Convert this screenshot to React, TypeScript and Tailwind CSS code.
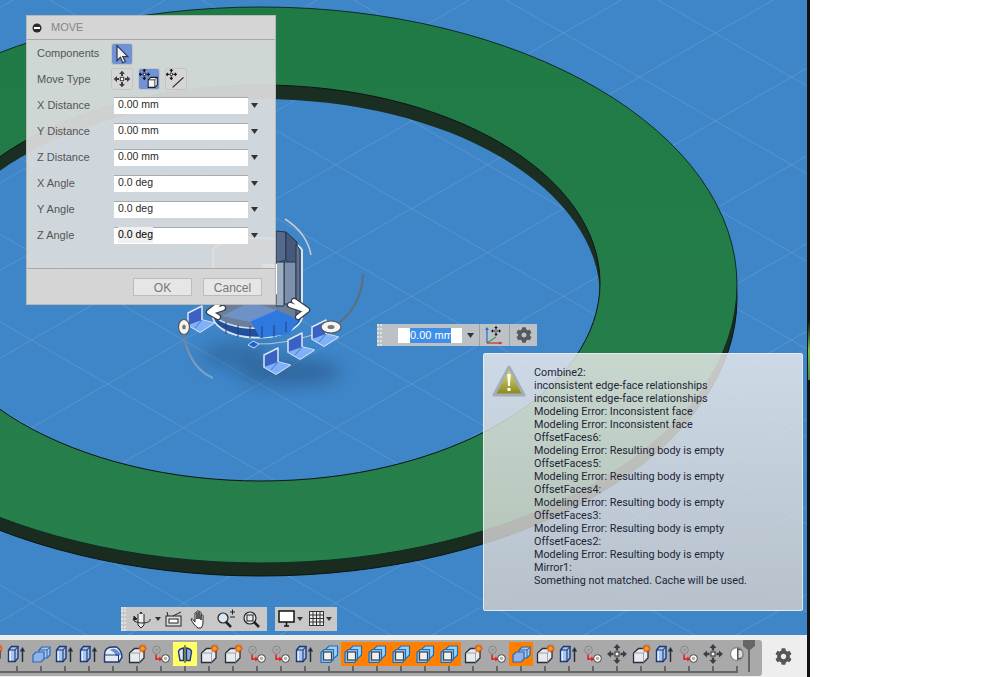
import type { ReactNode } from "react";
import { FaCog } from "react-icons/fa";

const FIELDS = [
  { label: "X Distance", value: "0.00 mm" },
  { label: "Y Distance", value: "0.00 mm" },
  { label: "Z Distance", value: "0.00 mm" },
  { label: "X Angle", value: "0.0 deg" },
  { label: "Y Angle", value: "0.0 deg" },
  { label: "Z Angle", value: "0.0 deg", focused: true },
];

const MESSAGES = [
  "Combine2:",
  "inconsistent edge-face relationships",
  "inconsistent edge-face relationships",
  "Modeling Error: Inconsistent face",
  "Modeling Error: Inconsistent face",
  "OffsetFaces6:",
  "Modeling Error: Resulting body is empty",
  "OffsetFaces5:",
  "Modeling Error: Resulting body is empty",
  "OffsetFaces4:",
  "Modeling Error: Resulting body is empty",
  "OffsetFaces3:",
  "Modeling Error: Resulting body is empty",
  "OffsetFaces2:",
  "Modeling Error: Resulting body is empty",
  "Mirror1:",
  "Something not matched. Cache will be used.",
];

type Kind = "press" | "combine" | "fillet" | "star" | "spheres" | "mirror" | "offset" | "move" | "end";

const TIMELINE: { kind: Kind; bg?: string }[] = [
  { kind: "star" },
  { kind: "press" },
  { kind: "combine" },
  { kind: "press" },
  { kind: "press" },
  { kind: "fillet" },
  { kind: "star" },
  { kind: "spheres" },
  { kind: "mirror", bg: "bg-[#ffff66]" },
  { kind: "star" },
  { kind: "star" },
  { kind: "spheres" },
  { kind: "spheres" },
  { kind: "press" },
  { kind: "offset" },
  { kind: "offset", bg: "bg-[#ff8000]" },
  { kind: "offset", bg: "bg-[#ff8000]" },
  { kind: "offset", bg: "bg-[#ff8000]" },
  { kind: "offset", bg: "bg-[#ff8000]" },
  { kind: "offset", bg: "bg-[#ff8000]" },
  { kind: "star" },
  { kind: "spheres" },
  { kind: "combine", bg: "bg-[#ff8000]" },
  { kind: "star" },
  { kind: "press" },
  { kind: "spheres" },
  { kind: "move" },
  { kind: "star" },
  { kind: "press" },
  { kind: "spheres" },
  { kind: "move" },
  { kind: "end" },
];

function MoveArrows({ color = "#3c3f44" }: { color?: string }) {
  return (
    <g fill={color}>
      <path d="M12 2l3.500 4h-2.300v2.500h-2.400V6H8.500z" />
      <path d="M12 22l3.500-4h-2.300v-2.500h-2.400V18H8.500z" />
      <path d="M2 12l4-3.500v2.300h2.500v2.400H6v2.300z" />
      <path d="M22 12l-4-3.500v2.300h-2.500v2.400H18v2.300z" />
      <rect x="10" y="10" width="4" height="4" fill="#fff" stroke={color} strokeWidth="1.200" />
    </g>
  );
}

function TimelineGlyph({ kind }: { kind: Kind }) {
  switch (kind) {
    case "press":
      return (
        <>
          <path d="M3.500 8l3-3.500H13V16l-3 3.500H3.500z" fill="#a9c5ea" stroke="#1c3878" strokeWidth="1.400" />
          <path d="M3.500 8H10v11.500M10 8l3-3.500" fill="none" stroke="#1c3878" strokeWidth="1.100" />
          <path d="M4.500 9H6v9.500H4.500z" fill="#e6eef8" />
          <path d="M17.500 20V7" stroke="#25324a" strokeWidth="1.500" />
          <path d="M14.800 9.500l2.700-4.500 2.700 4.500z" fill="#25324a" />
        </>
      );
    case "combine":
      return (
        <>
          <path d="M10 8l3-3h8v8l-3 3h-8z" fill="#a9c5ea" stroke="#2a69b8" strokeWidth="1.200" />
          <path d="M4 13l3-3h8v7l-3 3H4z" fill="#8fb3e4" stroke="#2a69b8" strokeWidth="1.200" />
          <path d="M10 8h8v8M18 8l3-3" fill="none" stroke="#2a69b8" />
        </>
      );
    case "fillet":
      return (
        <>
          <path d="M3.500 20v-7q0-8 8-8h4q5 3 5.500 10l-3 5z" fill="#e6e9ef" stroke="#1c3878" strokeWidth="1.400" />
          <path d="M9 8q6-4 11 5l-5 1q-1-4-6-6z" fill="#5e8fd6" />
          <path d="M3.500 13h14v7" fill="none" stroke="#1c3878" />
        </>
      );
    case "star":
      return (
        <>
          <path d="M4.500 11l5-4.500H19V16l-4.500 4.500h-10z" fill="#e7eaee" stroke="#2b2f38" strokeWidth="1.300" />
          <path d="M4.500 11h10v9.500M14.500 11L19 6.500" fill="none" stroke="#8b919b" strokeWidth="0.800" />
          <path d="M17.500 2.500l.9 2 1.900-1-.7 2.100 2.100.6-2 1 .9 2-2.100-.8-.9 2-.9-2-2 .8.800-2-2-1 2.100-.6-.7-2.100 1.900 1z" fill="#f5a00a" stroke="#e23a12" strokeWidth="0.700" />
        </>
      );
    case "spheres":
      return (
        <>
          <circle cx="7.500" cy="8" r="3.800" fill="#a9acb0" stroke="#888" />
          <rect x="6" y="6.500" width="3" height="3" fill="#999" />
          <circle cx="16.500" cy="16.500" r="3.900" fill="#f4f4f4" stroke="#444" />
          <rect x="15" y="15" width="3" height="3" fill="#b5b5b5" />
          <path d="M7 12.500v4.500h4.500" fill="none" stroke="#e81818" strokeWidth="1.500" />
          <path d="M10.300 14.500l3 2.500-3 2.500z" fill="#e81818" />
        </>
      );
    case "mirror":
      return (
        <>
          <path d="M10.500 18.500H7l-1.500-9q.5-2.500 5-3.500z" fill="#dfe6f0" stroke="#1c3878" strokeWidth="1.400" />
          <path d="M13.500 18.500H17l1.500-9q-.5-2.500-5-3.500z" fill="#8fb3e4" stroke="#1c3878" strokeWidth="1.400" />
          <path d="M12 3v18" stroke="#222" />
        </>
      );
    case "offset":
      return (
        <>
          <path d="M9 7l3-3h8.500v9l-3 3H9z" fill="#9fd0f4" stroke="#1b6fb8" strokeWidth="1.200" />
          <path d="M4 10.500l3-3h9.500v10L13.500 20.500H4z" fill="#8cc2ee" stroke="#1b6fb8" strokeWidth="1.200" />
          <rect x="6.500" y="10" width="8" height="8" fill="#f0f0f0" stroke="#3a3f48" strokeWidth="1.200" />
        </>
      );
    case "move":
      return <MoveArrows />;
    case "end":
      return (
        <>
          <circle cx="12" cy="12" r="6.500" fill="#fff" stroke="#8a8a8a" strokeWidth="1.300" />
          <path d="M12 6a6 6 0 0 1 0 12z" fill="#555" />
          <path d="M13.500 8a4 4 0 0 1 0 8z" fill="#ddd" />
        </>
      );
  }
}

function TimelineCell({ kind, bg }: { kind: Kind; bg?: string }) {
  return (
    <div className="flex w-6 shrink-0 flex-col items-center">
      <div className={`h-6 w-6 ${bg ?? ""}`}>
        <svg width="24" height="24" viewBox="0 0 24 24">
          <TimelineGlyph kind={kind} />
        </svg>
      </div>
      <div className="h-[5px] w-[2px] bg-[#666]" />
    </div>
  );
}

function Timeline() {
  return (
    <div className="flex h-[42px] shrink-0 items-start bg-[#eeeeee] pt-[5px]">
      <div className="relative h-[36px] w-[762px] shrink-0 overflow-hidden rounded-r-[3px] bg-[#a9a9a9] pt-[2px]">
        <div className="-ml-[19px] flex">
          {TIMELINE.map((item, i) => (
            <TimelineCell key={i} kind={item.kind} bg={item.bg} />
          ))}
        </div>
        <div className="h-[2px] w-[738px] bg-[#666]" />
        {/* rollback marker */}
        <svg className="absolute left-[742px] top-0" width="14" height="33" viewBox="0 0 14 33">
          <path d="M1 0h12v6l-5 4v22H6V10L1 6z" fill="#666" />
        </svg>
      </div>
      <div className="flex flex-1 justify-center pr-[3px] pt-[8px] text-[#555]">
        <FaCog size={17} />
      </div>
    </div>
  );
}

function Scene() {
  const lines: ReactNode[] = [];
  for (let k = -12; k < 12; k++) {
    const a = 506 + k * 152;
    lines.push(<line key={`d${k}`} x1={a} y1={0} x2={a + 1300} y2={750} />);
    const b = 773 + k * 152;
    lines.push(<line key={`u${k}`} x1={b} y1={0} x2={b - 1300} y2={750} />);
  }
  return (
    <svg className="absolute inset-0" width="807" height="635" viewBox="0 0 807 635">
      <defs>
        <clipPath id="hole">
          <ellipse cx="261" cy="283" rx="339" ry="198" />
        </clipPath>
        <linearGradient id="top-face" x1="0" y1="0" x2="0" y2="1">
          <stop offset="0" stopColor="#207a46" />
          <stop offset="1" stopColor="#27804b" />
        </linearGradient>
        <linearGradient id="arc-fade" x1="0" y1="0" x2="1" y2="1">
          <stop offset="0" stopColor="#6d7a86" />
          <stop offset="1" stopColor="#c4d0da" stopOpacity="0.4" />
        </linearGradient>
        <filter id="soft" x="-50%" y="-50%" width="200%" height="200%">
          <feGaussianBlur stdDeviation="9" />
        </filter>
      </defs>
      <g stroke="#fff" strokeOpacity="0.12" strokeWidth="1">{lines}</g>

      {/* ring */}
      <ellipse cx="261" cy="298" rx="476" ry="278" fill="#1a2c20" stroke="#0c1410" />
      <ellipse cx="261" cy="285" rx="476" ry="278" fill="url(#top-face)" stroke="#0f2a25" />
      <ellipse cx="261" cy="283" rx="339" ry="198" fill="#3f86c9" />
      <g clipPath="url(#hole)">
        <g stroke="#fff" strokeOpacity="0.12" strokeWidth="1">{lines}</g>
        <path
          fillRule="evenodd"
          fill="#1b2e22"
          d="M-200 -20H800V640H-200ZM-78 297a339 198 0 1 0 678 0a339 198 0 1 0 -678 0Z"
        />
      </g>
      <ellipse cx="261" cy="283" rx="339" ry="198" fill="none" stroke="#0c1410" />

      {/* move manipulator */}
      <ellipse cx="290" cy="372" rx="52" ry="13" fill="#1c3f68" opacity="0.45" filter="url(#soft)" />
      <ellipse cx="235" cy="355" rx="34" ry="13" fill="#1c3f68" opacity="0.35" filter="url(#soft)" />
      <g fill="none" strokeWidth="2">
        <path d="M183 332q6 36 30 46" stroke="url(#arc-fade)" />
        <path d="M340 322q22-18 23-48" stroke="#5f6d78" />
        <path d="M285 219q22 14 26 36" stroke="#c2cbd2" strokeWidth="1.500" />
        <path d="M250 344q40 2 80-16" stroke="#b8c3cc" strokeWidth="1" />
      </g>
      <path d="M213 250a45 14 0 0 1 89 0v68a45 23 0 0 1-89 0z" fill="#6b7f9b" stroke="#d6e4f2" strokeWidth="2" />
      <g stroke="#26344f" strokeWidth="1">
        <path d="M276 231l10 1v28l-10 3z" fill="#55698a" />
        <path d="M286 232l11 10v32l-11-14z" fill="#47597a" />
        <path d="M284 262h12v42h-12z" fill="#7d90ab" />
        <path d="M276 262h8v44h-8z" fill="#a0aec1" />
        <path d="M296 244l4 6v62l-4 6z" fill="#5f7391" />
      </g>
      <path d="M262 264h15v30l-15 8z" fill="#fff" />
      <path d="M213 318a45 23 0 0 0 89 0v-5a45 18 0 0 1-89 0z" fill="#21509f" stroke="#d6e4f2" strokeWidth="1.500" />
      <path d="M250 320l27-10 22 10-10 14-29 4z" fill="#2f78e0" />
      <path d="M222 316l28-14 27 8-27 12z" fill="#6f9ad8" opacity="0.7" />
      <path d="M248 345l5-4 6 3-5 4z" fill="#1f5fd0" stroke="#cfe0f2" />
      <g stroke="#23406f" strokeWidth="1">
        <path d="M226 322v12M238 325v12M250 326v12M262 326v12M274 325v12M286 322v10" />
      </g>

      {/* translation arrows */}
      <g fill="none" strokeLinecap="round" strokeLinejoin="round">
        <path d="M294 301l13 9-9 7M305 310l-15-5" stroke="#35404e" strokeWidth="6.500" />
        <path d="M294 301l13 9-9 7M305 310l-15-5" stroke="#fff" strokeWidth="4" />
        <path d="M218 305l-9 7 9 5M211 312l12-4" stroke="#35404e" strokeWidth="6.500" />
        <path d="M218 305l-9 7 9 5M211 312l12-4" stroke="#fff" strokeWidth="4" />
      </g>

      {/* plane handles */}
      {[
        [264, 351],
        [288, 336],
        [312, 323],
        [188, 309],
      ].map(([x, y]) => (
        <g key={x} transform={`translate(${x} ${y})`} strokeLinejoin="round">
          <path d="M0 4l14-7v14l12 3-14 9-12-7z" fill="#3a62c4" stroke="#dbe6f2" strokeWidth="1.500" />
          <path d="M0 16l14-5 12 3-14 9z" fill="#7fb0f8" />
          <path d="M7 19l7-8" stroke="#3a62c4" strokeWidth="0.800" />
        </g>
      ))}

      {/* rotation discs */}
      <ellipse cx="184" cy="327" rx="5.500" ry="7.500" fill="#f4f4f4" stroke="#555" strokeWidth="1.200" />
      <ellipse cx="184" cy="327" rx="1.800" ry="2.500" fill="#777" />
      <ellipse cx="331" cy="327" rx="10" ry="6" fill="#f4f4f4" stroke="#555" strokeWidth="1.200" />
      <ellipse cx="331" cy="327" rx="3.500" ry="2" fill="#777" />
    </svg>
  );
}

function ToolButton({ active, children }: { active?: boolean; children: ReactNode }) {
  return (
    <div
      className={`grid h-[22px] w-[22px] place-items-center rounded-[3px] border border-[#c4c4c4] ${
        active ? "bg-[#7292d8]" : "bg-[#d6d6d6]"
      }`}
    >
      <svg width="20" height="20" viewBox="0 0 24 24">
        {children}
      </svg>
    </div>
  );
}

function Cursor() {
  return <path d="M6 2l13 13h-6l3 6-3 1.500-3-6.500-4 4z" fill="#eef0f4" stroke="#333a48" strokeWidth="1.500" />;
}

function MoveDialog() {
  return (
    <div className="absolute left-[26px] top-[15px] flex h-[290px] w-[250px] flex-col border border-[#b8b8b8] bg-[rgba(220,222,222,0.93)] font-['Liberation_Sans',sans-serif] text-[11px] text-[#555]">
      <div className="flex h-[24px] shrink-0 items-center gap-[9px] border-b border-[#a8a8a8] bg-[#d5d5d5] pl-[5px] text-[#858585]">
        <svg width="10" height="10" viewBox="0 0 10 10">
          <circle cx="5" cy="5" r="4.500" fill="#2b2b2b" />
          <rect x="2" y="4" width="6" height="2" fill="#fff" />
        </svg>
        MOVE
      </div>
      <div className="flex flex-1 flex-col pl-[10px]">
        <div className="flex h-[26px] shrink-0 items-center pt-[1px]">
          <span className="w-[74px]">Components</span>
          <ToolButton active>
            <Cursor />
          </ToolButton>
        </div>
        <div className="flex h-[26px] shrink-0 items-center gap-[5px]">
          <span className="w-[69px]">Move Type</span>
          <ToolButton>
            <MoveArrows />
          </ToolButton>
          <ToolButton active>
            <g transform="translate(-2 -2) scale(0.7)">
              <MoveArrows color="#111" />
            </g>
            <path d="M11 13l3-3h8v9l-3 3h-8z" fill="#f4f6fa" stroke="#222" strokeWidth="1.300" />
            <path d="M11 13h8v9M19 13l3-3" fill="none" stroke="#222" />
          </ToolButton>
          <ToolButton>
            <g transform="translate(-2 -2) scale(0.7)">
              <MoveArrows color="#111" />
            </g>
            <path d="M8 22L21 10" stroke="#222" strokeWidth="1.400" />
          </ToolButton>
        </div>
        {FIELDS.map((f) => (
          <div key={f.label} className="flex h-[26px] shrink-0 items-center">
            <span className="w-[77px]">{f.label}</span>
            <div className="flex h-[17px] w-[134px] items-center border-t border-[#aaa] bg-white pb-px pl-[4px] text-[10.5px] text-[#2a2a2a]">
              <span className={f.focused ? "bg-[#f0f0f0] text-black" : ""}>{f.value}</span>
            </div>
            <svg className="ml-[3px]" width="7" height="5" viewBox="0 0 7 5">
              <path d="M0 0h7L3.500 5z" fill="#333" />
            </svg>
          </div>
        ))}
      </div>
      <div className="flex h-[36px] shrink-0 items-center justify-end gap-[11px] border-t border-[#a8a8a8] bg-[#d5d5d5] pr-[13px] text-[12px] text-[#777]">
        <button className="h-[18px] w-[59px] border border-[#bcbcbc] bg-[#e6e6e6]">OK</button>
        <button className="h-[18px] w-[59px] border border-[#bcbcbc] bg-[#e6e6e6]">Cancel</button>
      </div>
    </div>
  );
}

function Grip() {
  return <div className="h-full w-[5px] shrink-0 border-x-2 border-dotted border-[#e2e2e2]" />;
}

function ValueInput() {
  return (
    <div className="absolute left-[377px] top-[324px] flex h-[22px] w-[160px] items-center bg-[#bcc1c6] font-['Liberation_Sans',sans-serif] text-[11px]">
      <Grip />
      <div className="ml-[16px] flex h-[15px] w-[64px] items-center bg-white pl-[12px]">
        <span className="w-[41px] whitespace-nowrap bg-[#3f8fe8] leading-[15px] text-white">0.00 mm</span>
      </div>
      <svg className="ml-[5px]" width="7" height="5" viewBox="0 0 7 5">
        <path d="M0 0h7L3.500 5z" fill="#333" />
      </svg>
      <div className="ml-[5px] h-full w-px bg-[#9aa0a6]" />
      <svg width="29" height="22" viewBox="0 0 29 22">
        <path d="M7 19V4" stroke="#1f6fd8" strokeWidth="1.200" />
        <path d="M5 6l2-3 2 3z" fill="#1f6fd8" />
        <path d="M7 19L16 13" stroke="#2aa34a" strokeWidth="1.200" />
        <path d="M7 19h14" stroke="#d8222a" strokeWidth="1.200" />
        <path d="M19.500 17.500l3 1.500-3 1.500z" fill="#d8222a" />
        <g transform="translate(10 1) scale(0.5)">
          <MoveArrows color="#111" />
        </g>
      </svg>
      <div className="h-full w-px bg-[#9aa0a6]" />
      <div className="flex flex-1 justify-center text-[#55595e]">
        <FaCog size={16} />
      </div>
    </div>
  );
}

function MessagePanel() {
  return (
    <div className="absolute left-[483px] top-[353px] flex h-[258px] w-[320px] rounded-[2px] border border-[#e6ebf0] bg-linear-to-b from-[rgba(236,235,236,0.82)] to-[rgba(208,206,204,0.82)]">
      <svg className="ml-[8px] mt-[10px] shrink-0" width="34" height="34" viewBox="0 0 34 34">
        <defs>
          <linearGradient id="warn" x1="0" y1="0" x2="0" y2="1">
            <stop offset="0" stopColor="#e4e67a" />
            <stop offset="1" stopColor="#85851c" />
          </linearGradient>
        </defs>
        <path d="M17 3L32 31H2z" fill="url(#warn)" stroke="#a6acb4" strokeWidth="3" strokeLinejoin="round" />
        <path d="M15.300 10h3.400l-.8 12h-1.800z" fill="#fff" />
        <rect x="15.500" y="24" width="3" height="3" fill="#fff" />
      </svg>
      <div className="ml-[8px] pt-[12px] font-['Roboto',sans-serif] text-[10.8px] leading-[13px] text-[#1e2538]">
        {MESSAGES.map((m, i) => (
          <div key={i} className="whitespace-nowrap">
            {m}
          </div>
        ))}
      </div>
    </div>
  );
}

function NavBars() {
  return (
    <div className="absolute left-[121px] top-[607px] flex h-[24px] gap-[8px]">
      <div className="flex h-full w-[146px] items-center bg-[#c8c8c8]">
        <Grip />
        <svg width="141" height="24" viewBox="0 0 141 24">
          <g fill="none" stroke="#222" strokeWidth="1">
            {/* orbit */}
            <path d="M15 17l0-12M15 5l-2 3h4z" fill="#eee" />
            <path d="M12 7v11l3 3 3-3V7" fill="#eee" />
            <path d="M8 11c-3 3 4 5 8 5s9-1 8-4" />
            <path d="M8 9l0 4 3-1z" fill="#222" />
            {/* look at */}
            <rect x="40" y="9" width="15" height="10" fill="#ddd" />
            <rect x="43" y="12" width="9" height="4" fill="#fff" />
            <path d="M42 9l-1-4M47 9l8-4" />
            {/* hand */}
            <path
              d="M72 21c-3-2-6-6-7-9 1-1 2 0 3 2l1 1V6c1-1 2 0 2 1v5V4c1-1 2 0 2 1v7V5c1-1 2 0 2 1v7V8c1-1 2 0 2 1v6c0 3-1 5-2 6z"
              fill="#fff"
            />
            {/* zoom */}
            <circle cx="97" cy="11" r="5" fill="#d8e8f4" strokeWidth="1.200" />
            <path d="M100 15l5 5" strokeWidth="2.500" />
            <path d="M104 5h5M106.500 2.500v5M104 10h5" />
            {/* fit */}
            <circle cx="124" cy="11" r="6" fill="#e2e8ec" strokeWidth="1.200" />
            <rect x="121" y="8" width="6" height="6" />
            <path d="M128 15l5 5" strokeWidth="2.500" />
          </g>
          <path d="M29 10h6l-3 4z" fill="#333" />
        </svg>
      </div>
      <div className="flex h-full w-[62px] items-center bg-[#c8c8c8] pl-[3px]">
        <svg width="59" height="24" viewBox="0 0 59 24">
          <rect x="1" y="4" width="15" height="11" fill="#fff" stroke="#111" strokeWidth="1.500" />
          <path d="M6 19h5M8.500 15v4" stroke="#111" strokeWidth="1.500" />
          <path d="M19 10h6l-3 4z" fill="#333" />
          <g fill="none" stroke="#333">
            <rect x="31.500" y="4.500" width="14" height="14" fill="#eee" />
            <path d="M35 4.500v14M38.500 4.500v14M42 4.500v14M31.500 8h14M31.500 11.500h14M31.500 15h14" />
          </g>
          <path d="M48 10h6l-3 4z" fill="#333" />
        </svg>
      </div>
    </div>
  );
}

export default function App() {
  return (
    <div className="flex h-[677px] w-[1008px] overflow-hidden bg-white">
      <div className="flex w-[807px] shrink-0 flex-col">
        <div className="relative flex-1 overflow-hidden bg-[#3f86c9]">
          <Scene />
          <MoveDialog />
          <ValueInput />
          <MessagePanel />
          <NavBars />
        </div>
        <Timeline />
      </div>
      <div className="relative w-[3px] shrink-0 bg-[#111]">
        {/* glow from the window behind */}
        <div className="absolute left-px top-[320px] h-[60px] w-[2px] bg-linear-to-b from-[#111] via-[#6fc04a] to-[#4e8a3a]" />
      </div>
    </div>
  );
}
